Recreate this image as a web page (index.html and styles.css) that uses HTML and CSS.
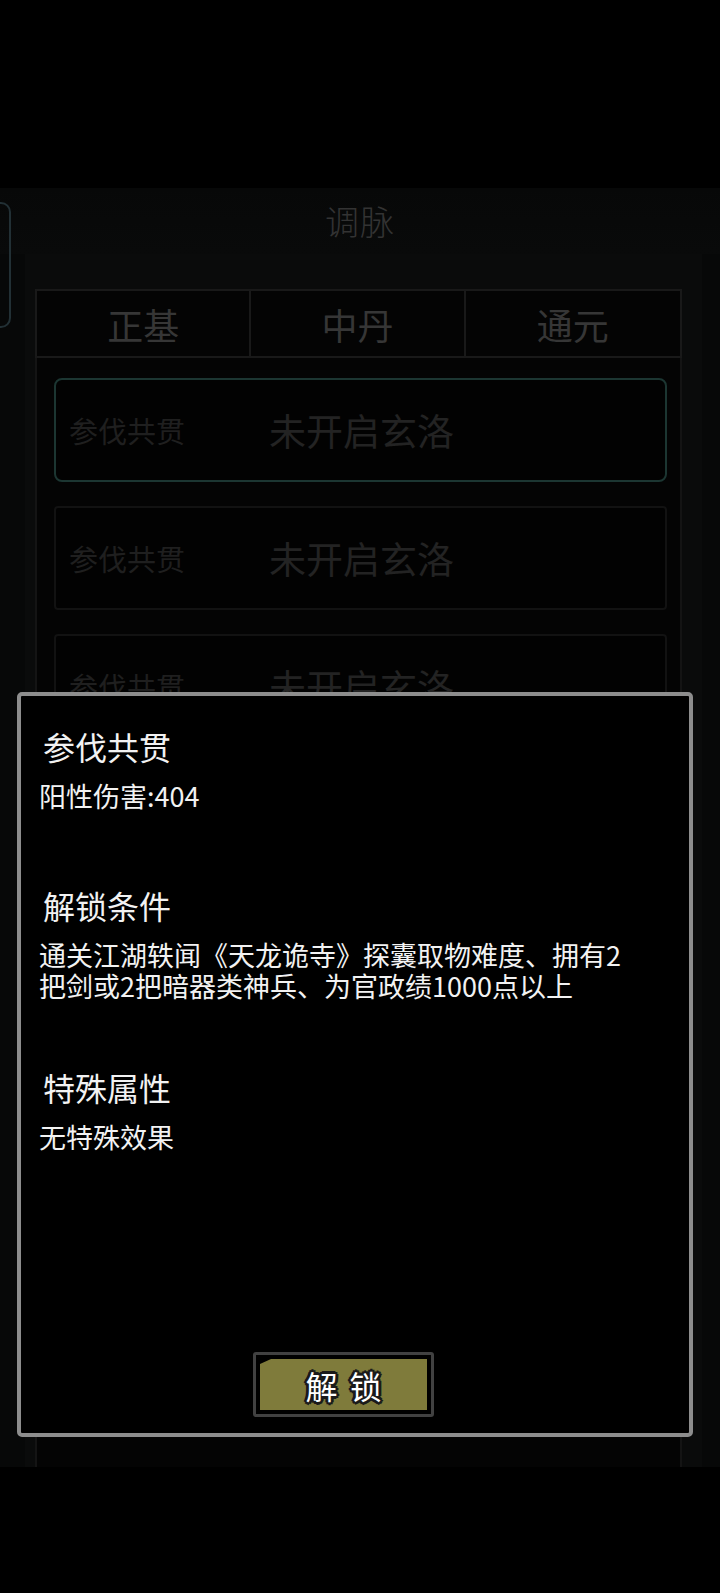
FILE: index.html
```html
<!DOCTYPE html>
<html lang="zh-CN">
<head>
<meta charset="utf-8">
<title>调脉</title>
<link rel="stylesheet" href="styles.css">
</head>
<body>
<div class="screen">
  <div class="side-tab"></div>
  <div class="top-gap"></div>
  <header class="header"><h1 class="title">调脉</h1></header>
  <div class="body">
    <section class="panel">
      <nav class="tabs">
        <div class="tab">正基</div>
        <div class="tab">中丹</div>
        <div class="tab">通元</div>
      </nav>
      <div class="list">
        <div class="card card-active"><span class="card-name">参伐共贯</span><span class="card-status">未开启玄洛</span></div>
        <div class="card"><span class="card-name">参伐共贯</span><span class="card-status">未开启玄洛</span></div>
        <div class="card"><span class="card-name">参伐共贯</span><span class="card-status">未开启玄洛</span></div>
      </div>
    </section>
  </div>

  <div class="modal">
    <div class="m-head m-first">参伐共贯</div>
    <div class="m-text m-gap">阳性伤害:404</div>
    <div class="m-head m-section">解锁条件</div>
    <div class="m-text m-gap">通关江湖轶闻《天龙诡寺》探囊取物难度、拥有2<br>把剑或2把暗器类神兵、为官政绩1000点以上</div>
    <div class="m-head m-section2">特殊属性</div>
    <div class="m-text m-gap">无特殊效果</div>
    <div class="m-spacer"></div>
    <button class="btn"><span class="btn-face"><span>解</span><span>锁</span></span></button>
  </div>
</div>
</body>
</html>
```

FILE: styles.css
```css
* { box-sizing: border-box; }
html, body { margin: 0; padding: 0; background: #000; }
body { font-family: "Noto Sans CJK SC", "Noto Sans", sans-serif; }

.screen {
  position: relative;
  width: 720px;
  height: 1593px;
  overflow: hidden;
  background: #000;
}

.top-gap { height: 188px; }

.header {
  height: 66px;
  background: linear-gradient(#070808, #090a0a);
  display: flex;
  align-items: center;
  justify-content: center;
}
.title {
  margin: 0;
  font-size: 34px;
  line-height: 66px;
  font-weight: 300;
  color: #333;
  letter-spacing: 1px;
}

.body {
  height: 1213px;
  background: #070808;
  padding: 0 18px 0 25px;
}
.panel {
  height: 100%;
  background: #0a0b0b;
  padding: 35px 20px 0 10px;
  display: flex;
  flex-direction: column;
}

.tabs {
  display: grid;
  grid-template-columns: 1fr 1fr 1fr;
  height: 69px;
  border: 2px solid #191919;
  background: #040404;
}
.tab {
  display: flex;
  align-items: center;
  justify-content: center;
  font-size: 36px;
  color: #363636;
  border-right: 2px solid #191919;
}
.tab:last-child { border-right: none; }

.list {
  flex: 1;
  background: #040404;
  border-left: 2px solid #141414;
  border-right: 2px solid #141414;
  padding: 20px 13px 0 17px;
  display: flex;
  flex-direction: column;
  gap: 24px;
  overflow: hidden;
}
.card {
  flex: none;
  height: 104px;
  border: 2px solid #121212;
  border-radius: 4px;
  background: #020202;
  display: flex;
  align-items: center;
  padding-left: 13px;
}
.card-active {
  border-color: #1c3632;
  border-radius: 8px;
}
.card-name {
  width: 200px;
  font-size: 29px;
  color: #1f1f1f;
}
.card-status {
  font-size: 37px;
  color: #232323;
}

.side-tab {
  position: absolute;
  left: -20px;
  top: 202px;
  width: 31px;
  height: 126px;
  border: 2px solid #223035;
  border-radius: 10px;
}

.modal {
  position: absolute;
  left: 17px;
  top: 692px;
  width: 676px;
  height: 745px;
  background: #000;
  border: 4px solid #8d8d8d;
  border-radius: 5px;
  padding: 30px 20px 16px 18px;
  display: flex;
  flex-direction: column;
  color: #f2f2f2;
}
.m-head {
  font-size: 32px;
  line-height: 40px;
  margin-left: 4px;
}
.m-text {
  font-size: 27px;
  line-height: 31px;
}
.m-gap { margin-top: 14px; }
.m-section { margin-top: 74px; }
.m-section2 { margin-top: 66px; }
.m-spacer { flex: 1; }

.btn {
  align-self: flex-start;
  margin-left: 214px;
  width: 181px;
  height: 65px;
  border: 3px solid #414141;
  border-radius: 3px;
  padding: 4px;
  background: #000;
  display: flex;
  font-family: inherit;
}
.btn-face {
  flex: 1;
  background: #7f7b3b;
  clip-path: polygon(11px 0, 100% 0, 100% 100%, 0 100%, 0 5px);
  display: flex;
  align-items: center;
  justify-content: center;
  gap: 12px;
  font-size: 32px;
  line-height: 1;
  color: #fff;
  text-shadow:
    2px 0 0 #1a1a1a, -2px 0 0 #1a1a1a, 0 2px 0 #1a1a1a, 0 -2px 0 #1a1a1a,
    2px 2px 0 #1a1a1a, -2px 2px 0 #1a1a1a, 2px -2px 0 #1a1a1a, -2px -2px 0 #1a1a1a,
    3px 0 0 #1a1a1a, -3px 0 0 #1a1a1a, 0 3px 0 #1a1a1a, 0 -3px 0 #1a1a1a;
}
```
